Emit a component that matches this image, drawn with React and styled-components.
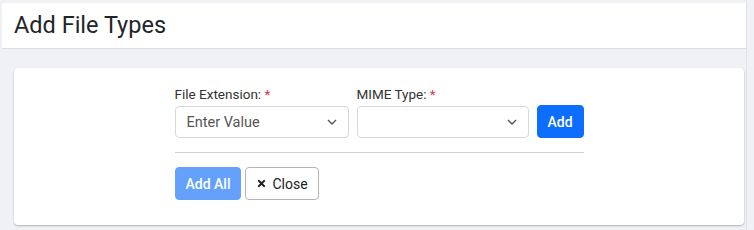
import React from 'react'
import styled, { createGlobalStyle } from 'styled-components'
import { FaTimes } from 'react-icons/fa'

const GlobalStyle = createGlobalStyle`
  html, body {
    margin: 0;
    padding: 0;
    background: #f0f1f5;
    font-family: Roboto, "Liberation Sans", sans-serif;
  }
`

const Page = styled.div`
  width: 747px;
  height: 230px;
  padding-top: 3px;
  box-sizing: border-box;
  border-right: 1px solid #e2e3e7;
`

const Header = styled.header`
  margin-left: 2px;
  height: 46px;
  background: #fff;
  border-bottom: 1px solid #dcdde1;
  display: flex;
  align-items: center;
  padding-left: 12px;
  padding-bottom: 2px;
  box-sizing: border-box;
  font-size: 23.5px;
  color: #212529;
`

const Card = styled.section`
  margin: 19px 2px 0 14px;
  height: 157px;
  background: #fff;
  border-radius: 4px;
  box-shadow: 0 1px 2px rgba(0, 0, 0, 0.25);
  display: flex;
  justify-content: center;
  padding-top: 18px;
  box-sizing: border-box;
`

const Form = styled.div`
  width: 409px;
`

const Row = styled.div`
  display: flex;
  align-items: flex-end;
  gap: 8px;
`

const Field = styled.div`
  display: flex;
  flex-direction: column;
  flex-shrink: 0;
  width: ${({ w }) => w}px;
`

const Label = styled.label`
  font-size: 13.5px;
  line-height: 16px;
  color: #333;
  margin-bottom: 4px;
  span {
    color: #dc3545;
  }
`

const Select = styled.div`
  height: 32px;
  border: 1px solid #d7d8db;
  border-radius: 4px;
  display: flex;
  align-items: center;
  justify-content: space-between;
  padding: 0 11px 0 11px;
  box-sizing: border-box;
  font-size: 14.5px;
  color: #555;
`

const Button = styled.button`
  height: 33px;
  flex-shrink: 0;
  border-radius: 4px;
  font-family: Roboto, "Liberation Sans", sans-serif;
  font-size: 14px;
  font-weight: ${({ variant }) => (variant === 'light' ? 400 : 500)};
  padding: 0 ${({ px }) => px || 10}px;
  display: inline-flex;
  align-items: center;
  gap: 5px;
  cursor: pointer;
  background: ${({ variant }) =>
    variant === 'primary' ? '#0d6efd' : variant === 'faded' ? '#64a1fc' : '#fff'};
  color: ${({ variant }) => (variant === 'light' ? '#222' : '#fff')};
  border: 1px solid
    ${({ variant }) =>
      variant === 'primary' ? '#0d6efd' : variant === 'faded' ? '#64a1fc' : '#b4b4b4'};
`

const Divider = styled.hr`
  border: none;
  border-top: 1px solid #cfcfcf;
  margin: 14px 0 14px;
`

const Actions = styled.div`
  display: flex;
  gap: 4px;
`

const Chevron = () => (
  <svg width="10" height="6" viewBox="0 0 10 6" fill="none">
    <path d="M1 1l4 4 4-4" stroke="#555" strokeWidth="1.4" />
  </svg>
)

const App = () => {
  return (
    <Page>
      <GlobalStyle />
      <Header>Add File Types</Header>
      <Card>
        <Form>
          <Row>
            <Field w={174}>
              <Label>
                File Extension: <span>*</span>
              </Label>
              <Select>
                Enter Value
                <Chevron />
              </Select>
            </Field>
            <Field w={172}>
              <Label>
                MIME Type: <span>*</span>
              </Label>
              <Select>
                <span />
                <Chevron />
              </Select>
            </Field>
            <Button variant="primary" px={10}>Add</Button>
          </Row>
          <Divider />
          <Actions>
            <Button variant="faded" px={10}>Add All</Button>
            <Button variant="light" px={10}>
              <FaTimes size={11} />
              Close
            </Button>
          </Actions>
        </Form>
      </Card>
    </Page>
  )
}

export default App
